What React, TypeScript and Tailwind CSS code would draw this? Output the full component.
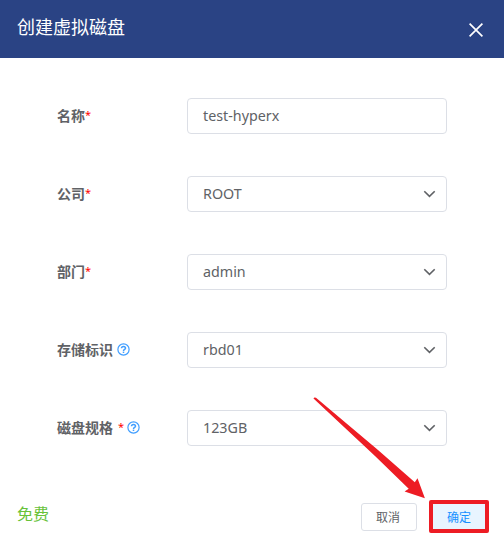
import React from "react";

type Field = { label: string; mark?: string; help?: string; value: string; select?: boolean };

const fields: Field[] = [
  { label: "名称", mark: "ml-0", value: "test-hyperx" },
  { label: "公司", mark: "ml-0", value: "ROOT", select: true },
  { label: "部门", mark: "ml-0", value: "admin", select: true },
  { label: "存储标识", help: "ml-[4px]", value: "rbd01", select: true },
  { label: "磁盘规格", mark: "ml-[5px]", help: "ml-[3px]", value: "123GB", select: true },
];

function HelpIcon({ className }: { className: string }) {
  return (
    <svg className={`${className} -mt-px`} width="13" height="13" viewBox="0 0 13 13" fill="none" stroke="#409eff">
      <circle cx="6.5" cy="6.5" r="5.6" strokeWidth="1.2" />
      <path d="M4.5 5.3c0-2.6 4-2.5 4-.1 0 1.3-2 1.3-2 2.7" strokeWidth="1.5" />
      <path d="M6.5 8.6v1.4" strokeWidth="1.5" />
    </svg>
  );
}

function Row({ field }: { field: Field }) {
  return (
    <div className="flex h-9 items-center">
      <div className="flex w-[130px] items-center text-sm font-bold text-[#606266]">
        <span>{field.label}</span>
        {field.mark && <span className={`${field.mark} -mt-[2px] w-[6px] text-[11px] font-normal text-[#ff0000]`}>*</span>}
        {field.help && <HelpIcon className={field.help} />}
      </div>
      <div className="flex h-9 w-[260px] items-center justify-between rounded border border-[#dcdfe6] pr-[10px] pl-[15px] text-[14.3px] text-[#606266]">
        <span>{field.value}</span>
        {field.select && (
          <svg width="13" height="8" viewBox="0 0 13 8" fill="none" stroke="#606266" strokeWidth="1.6">
            <path d="M1.3 1.2 6.5 6.3 11.7 1.2" />
          </svg>
        )}
      </div>
    </div>
  );
}

export default function App() {
  return (
    <div className="relative flex h-[550px] w-[504px] flex-col overflow-hidden bg-white font-['Noto_Sans','Noto_Sans_CJK_SC',sans-serif]">
      <header className="flex h-[58px] items-center justify-between bg-[#2a4384] pr-[21px] pl-[17px] text-white">
        <h1 className="-mt-[5px] text-lg leading-6">创建虚拟磁盘</h1>
        <svg className="mt-[2px]" width="14" height="14" viewBox="0 0 14 14" stroke="white" strokeWidth="1.7">
          <path d="M.6.6l12.8 12.8M13.4.6.6 13.4" />
        </svg>
      </header>
      <main className="flex flex-col gap-[42px] pt-10 pl-[57px]">
        {fields.map((f) => (
          <Row key={f.label} field={f} />
        ))}
      </main>
      <footer className="mt-[54px] flex h-[34px] items-center justify-between pr-[15px] pl-[17px]">
        <span className="-mt-[6px] text-base text-[#67c23a]">免费</span>
        <div className="flex items-center gap-3">
          <button className="h-7 w-14 rounded-[3px] border border-[#dcdfe6] bg-white pt-px pr-[2px] text-xs text-[#606266]">取消</button>
          <button className="-mt-px h-[33px] w-[60px] rounded-[2px] border-4 border-[#ed1c24] bg-[#e8f4ff] pt-[2px] text-xs text-[#1890ff]">确定</button>
        </div>
      </footer>
      <svg className="pointer-events-none absolute top-0 left-0" width="504" height="550" viewBox="0 0 504 550">
        <path d="M313.5 398.6Q314 397 316 397.8L378 450 414.8 482.2 417.5 478.3 424.9 498.2 404.6 491.6 408.7 488.8 375 456Z" fill="#ed1c24" />
      </svg>
    </div>
  );
}
